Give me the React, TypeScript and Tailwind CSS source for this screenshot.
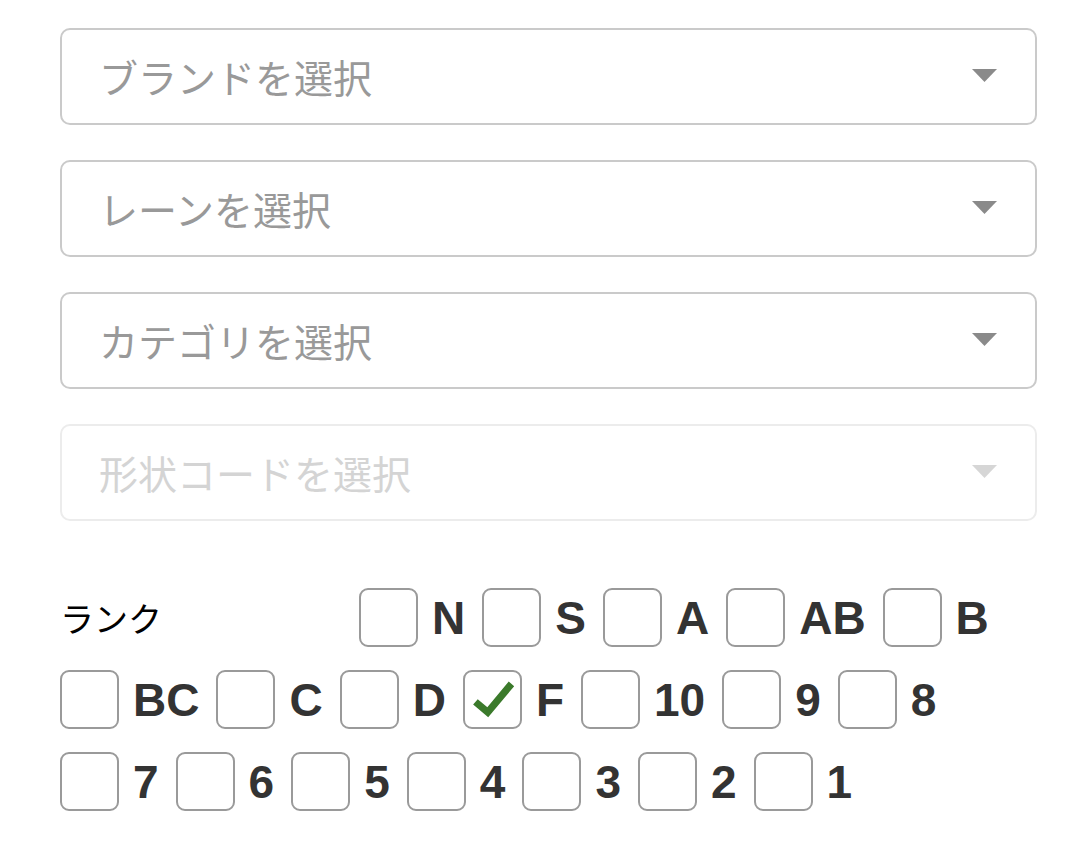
import React from "react";

const selects = [
	{ label: "ブランドを選択", disabled: false },
	{ label: "レーンを選択", disabled: false },
	{ label: "カテゴリを選択", disabled: false },
	{ label: "形状コードを選択", disabled: true },
];

const ranks = ["N", "S", "A", "AB", "B", "BC", "C", "D", "F", "10", "9", "8", "7", "6", "5", "4", "3", "2", "1"];

function SelectBox({ label, disabled }: { label: string; disabled: boolean }) {
	return (
		<div
			className={`flex items-center justify-between h-[97px] pl-[37px] pr-[38px] rounded-[10px] border-2 bg-white ${
				disabled ? "border-[#ececec]" : "border-[#cacaca]"
			}`}
		>
			<span className={`text-[39px] leading-none ${disabled ? "text-[#d4d4d4]" : "text-[#999999]"}`}>{label}</span>
			<svg width="25" height="13" viewBox="0 0 25 13" className="mt-[-2px]">
				<polygon points="0,0 25,0 12.5,13" fill={disabled ? "#d6d6d6" : "#8a8a8a"} />
			</svg>
		</div>
	);
}

function RankCheck({ label, checked }: { label: string; checked?: boolean }) {
	return (
		<label className="flex items-center">
			<span className="flex items-center justify-center w-[59px] h-[59px] rounded-[9px] border-2 border-[#9a9a9a] bg-white">
				{checked && (
					<svg width="58" height="58" viewBox="0 0 58 58">
						<path d="M11 31 L24 42 L49 12" fill="none" stroke="#3b7a2b" strokeWidth="7.5" />
					</svg>
				)}
			</span>
			<span
				className="ml-[14px] text-[46px] font-bold leading-none text-[#333333]"
				style={{ fontFamily: '"Liberation Sans", Arial, sans-serif' }}
			>
				{label}
			</span>
		</label>
	);
}

export default function App() {
	return (
		<div
			className="min-h-[849px] bg-white px-[60px] pt-[28px] pr-[37px]"
			style={{ fontFamily: '"Noto Sans CJK JP", "Noto Sans", sans-serif' }}
		>
			<div className="flex flex-col gap-[35px]">
				{selects.map((s) => (
					<SelectBox key={s.label} label={s.label} disabled={s.disabled} />
				))}
			</div>

			<div className="mt-[67px] flex flex-wrap items-center gap-x-[17px] gap-y-[23px]">
				<span className="w-[282px] text-[34px] leading-none text-black">ランク</span>
				{ranks.map((r) => (
					<RankCheck key={r} label={r} checked={r === "F"} />
				))}
			</div>
		</div>
	);
}
